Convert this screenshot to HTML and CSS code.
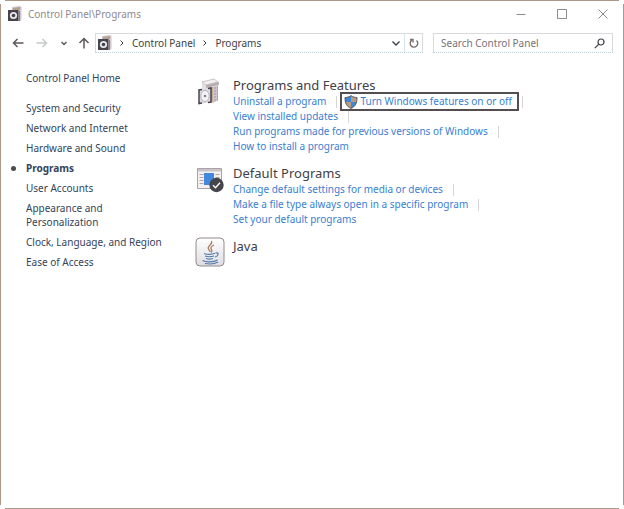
FILE: index.html
```
<!DOCTYPE html>
<html lang="en">
<head>
<meta charset="utf-8">
<title>Control Panel\Programs</title>
<link rel="stylesheet" href="styles.css">
</head>
<body>
<svg class="defs" aria-hidden="true">
  <symbol id="panel-icon" viewBox="0 0 14 16">
    <path d="M4 1l8-1 1.500 1v13l-2 1H4z" fill="#cfc8cc"/>
    <path d="M5 2l7-1v3H5z" fill="#b5a08c"/>
    <path d="M0 4h10.500v11H0z" fill="#46434a"/>
    <circle cx="5.500" cy="9.500" r="3.600" fill="#e9e9ee"/>
    <circle cx="5.500" cy="9.500" r="1.800" fill="#46434a"/>
    <path d="M11.500 5v10" stroke="#8e7c74"/>
  </symbol>
</svg>
<div class="window">
  <header class="titlebar">
    <svg class="app-icon" aria-hidden="true"><use href="#panel-icon"/></svg>
    <span class="title">Control Panel\Programs</span>
    <div class="controls">
      <button aria-label="Minimize"><svg viewBox="0 0 10 10"><path d="M0.500 5.500h9"/></svg></button>
      <button aria-label="Maximize"><svg viewBox="0 0 10 10"><path d="M0.500 0.500h9v9h-9z"/></svg></button>
      <button aria-label="Close"><svg viewBox="0 0 10 10"><path d="M0.500 0.500l9 9M9.500 0.500l-9 9"/></svg></button>
    </div>
  </header>
  <nav class="toolbar" aria-label="Navigation">
    <button class="nav" aria-label="Back"><svg viewBox="0 0 12 12"><path d="M11.500 6H1.500M5.500 2L1.500 6l4 4"/></svg></button>
    <button class="nav" aria-label="Forward" disabled><svg viewBox="0 0 12 12"><path d="M0.500 6h10M6.500 2l4 4-4 4"/></svg></button>
    <button class="nav recent" aria-label="Recent locations"><svg viewBox="0 0 12 12"><path d="M3.500 5L6 7.500 8.500 5"/></svg></button>
    <button class="nav" aria-label="Up"><svg viewBox="0 0 12 12"><path d="M6 11.500V1.500M1.500 6L6 1.500 10.500 6"/></svg></button>
    <div class="address">
      <svg class="app-icon" aria-hidden="true"><use href="#panel-icon"/></svg>
      <svg class="crumb-arrow" viewBox="0 0 6 8" aria-hidden="true"><path d="M1.500 1.500L4 4 1.500 6.500"/></svg>
      <a href="#">Control Panel</a>
      <svg class="crumb-arrow" viewBox="0 0 6 8" aria-hidden="true"><path d="M1.500 1.500L4 4 1.500 6.500"/></svg>
      <a href="#">Programs</a>
      <button class="history" aria-label="Previous locations"><svg viewBox="0 0 10 10"><path d="M1.500 3.500L5 7l3.500-3.500"/></svg></button>
      <button class="refresh" aria-label="Refresh"><svg viewBox="0 0 10 10"><path d="M2.800 2.200A3.800 3.800 0 1 0 7.500 2.500M1 1.500h3v3"/></svg></button>
    </div>
    <div class="search">
      <input type="search" placeholder="Search Control Panel" aria-label="Search Control Panel">
      <svg viewBox="0 0 11 11" aria-hidden="true"><circle cx="7" cy="4" r="3"/><path d="M4.800 6.200L0.800 10.200"/></svg>
    </div>
  </nav>
  <div class="content">
    <aside class="sidebar">
      <a class="home" href="#">Control Panel Home</a>
      <ul>
        <li><a href="#">System and Security</a></li>
        <li><a href="#">Network and Internet</a></li>
        <li><a href="#">Hardware and Sound</a></li>
        <li class="current"><a href="#" aria-current="page">Programs</a></li>
        <li><a href="#">User Accounts</a></li>
        <li><a href="#">Appearance and<br>Personalization</a></li>
        <li><a href="#">Clock, Language, and Region</a></li>
        <li><a href="#">Ease of Access</a></li>
      </ul>
    </aside>
    <main>
      <section>
        <svg class="category-icon" viewBox="0 0 30 30" aria-hidden="true">
          <path d="M7 6l12-3 4 3v4l-1 1v14l-5 2-10-2z" fill="#e4dfe2"/>
          <path d="M7 6l12-3 4 3-12 3z" fill="#f3f0f2" stroke="#c2b9be" stroke-width=".8"/>
          <path d="M11 9l13-3v3l-13 3z" fill="#b9b0b6"/>
          <path d="M13 12l5-1v15l-5 1z" fill="#c7ae92"/>
          <path d="M18 11l5-1v14l-5 3z" fill="#cfc7cd"/>
          <path d="M20 11v15M22.500 10.500v14" stroke="#a1969c" stroke-dasharray="2 1"/>
          <path d="M4 14l12-2v14l-12 2z" fill="#dcdae2"/>
          <path d="M7 13.500l-3 .5v13.500l3-.5M13 12.500l3-.5v14l-3 .5" fill="none" stroke="#46434a" stroke-width="1.500"/>
          <ellipse cx="10" cy="20" rx="4.200" ry="5.500" fill="#f4f3f8" stroke="#a9a4b4" stroke-width=".8"/>
          <circle cx="10" cy="20" r="1.300" fill="#8f7f78"/>
        </svg>
        <div>
          <h2>Programs and Features</h2>
          <ul class="tasks">
            <li class="divided"><a href="#">Uninstall a program</a></li>
            <li class="divided marked"><a href="#"><svg class="shield" viewBox="0 0 14 14" aria-hidden="true"><path d="M7 .7c2 1.400 4 1.800 6 1.800C13 8 11.500 11.500 7 13.400 2.500 11.500 1 8 1 2.500c2 0 4-.4 6-1.800z" fill="#b79c80"/><path d="M7 .7V7H1.500C1.100 5.500 1 4 1 2.500c2 0 4-.4 6-1.800zM7 7h5.500c-.8 3-2.500 5.200-5.500 6.400z" fill="#4086d8"/><path d="M7 .7c2 1.400 4 1.800 6 1.800C13 8 11.500 11.500 7 13.400 2.500 11.500 1 8 1 2.500c2 0 4-.4 6-1.800z" fill="none" stroke="#56555c"/></svg>Turn Windows features on or off</a></li>
            <li class="divided own-row"><a href="#">View installed updates</a></li>
            <li class="divided own-row"><a href="#">Run programs made for previous versions of Windows</a></li>
            <li class="own-row"><a href="#">How to install a program</a></li>
          </ul>
        </div>
      </section>
      <section>
        <svg class="category-icon" viewBox="0 0 30 30" aria-hidden="true">
          <path d="M2.500 4.500h24v20h-24z" fill="#f3f1f4" stroke="#aaa2a8"/>
          <path d="M3 5h23v2.500H3z" fill="#c9c3c8"/>
          <path d="M4.500 10.500h4M4.500 13.500h4M4.500 16.500h4M4.500 19.500h4M20.500 10.500h4M20.500 13.500h4" stroke="#b9a597"/>
          <path d="M9 9h10v12H9z" fill="#4388dc"/>
          <circle cx="21.500" cy="21" r="7.200" fill="#46454b"/>
          <path d="M18 21.300l2.500 2.500 4.500-5" fill="none" stroke="#fff" stroke-width="1.400"/>
        </svg>
        <div>
          <h2>Default Programs</h2>
          <ul class="tasks">
            <li class="divided own-row"><a href="#">Change default settings for media or devices</a></li>
            <li class="divided own-row"><a href="#">Make a file type always open in a specific program</a></li>
            <li class="own-row"><a href="#">Set your default programs</a></li>
          </ul>
        </div>
      </section>
      <section>
        <svg class="category-icon" viewBox="0 0 30 30" aria-hidden="true">
          <defs><linearGradient id="tile" x2="0" y2="1"><stop stop-color="#fff"/><stop offset="1" stop-color="#dddce2"/></linearGradient></defs>
          <rect x="1" y="1" width="28" height="28" rx="4" fill="url(#tile)" stroke="#958b8b"/>
          <path d="M16.500 4c2 3-5 5-3 8 .5 1 1.500 1.500 1.500 3M19 8c-3 1.500-4 3-2.500 4.500.8 1 .5 2-.5 3" fill="none" stroke="#a77f62" stroke-width="1.300"/>
          <path d="M9 16.500c3 1 8 1 11-.2M10 19c3 1 6 1 9 0M11 21.500c2.500.8 5 .8 7 0M20.500 16c4-1 3 3-.5 4M7.500 23.500c4 2 11 1.800 15-.5M10 26.500c4 .7 10 .4 13-1.500" fill="none" stroke="#527ba7" stroke-width="1.200"/>
        </svg>
        <div><h2>Java</h2></div>
      </section>
    </main>
  </div>
</div>
</body>
</html>
```
FILE: styles.css
```
* {
  box-sizing: border-box;
}

body {
  margin: 0;
  background: #fff;
  color: #3d3f46;
  font: 10px/14px "Noto Sans", "Open Sans", sans-serif;
}

.defs {
  position: absolute;
  width: 0;
  height: 0;
}

/* Thin frame whose four edges stop short of the corners */
.window {
  min-height: 100vh;
  padding: 1px;
  background:
    linear-gradient(#ad9786, #ad9786) top / calc(100% - 10px) 1px,
    linear-gradient(#ad9786, #ad9786) bottom / calc(100% - 10px) 1px,
    linear-gradient(#ad9786, #ad9786) left / 1px calc(100% - 8px),
    linear-gradient(#ad9786, #ad9786) right / 1px calc(100% - 8px);
  background-repeat: no-repeat;
}

a {
  color: inherit;
  text-decoration: none;
}

a:hover {
  text-decoration: underline;
}

button {
  display: flex;
  align-items: center;
  justify-content: center;
  padding: 0;
  border: 0;
  background: none;
  color: inherit;
}

button svg,
.crumb-arrow,
.search svg {
  fill: none;
  stroke: currentColor;
}

ul {
  margin: 0;
  padding: 0;
  list-style: none;
}

.titlebar {
  display: flex;
  align-items: center;
  gap: 6px;
  height: 26px;
  padding-left: 7px;
  color: #8f8a92;
}

.app-icon {
  flex: none;
  width: 14px;
  height: 16px;
}

.controls {
  display: flex;
  margin-left: auto;
}

.controls button {
  width: 41px;
  height: 26px;
}

.controls svg {
  width: 10px;
  height: 10px;
}

.toolbar {
  display: flex;
  align-items: center;
  height: 32px;
  padding: 0 10px 0 6px;
}

.nav {
  width: 22px;
  height: 20px;
  color: #5f5958;
}

.nav:disabled {
  width: 26px;
  color: #c3cbc9;
}

.recent {
  width: 18px;
}

.nav svg {
  width: 12px;
  height: 12px;
  stroke-width: 1.5;
}

.address,
.search {
  display: flex;
  align-items: center;
  height: 20px;
  border: 1px solid #d9dadd;
  border-bottom: 1px dotted #bcd0d8;
}

.address {
  flex: 1;
  gap: 7px;
  padding-left: 2px;
}

.crumb-arrow {
  width: 6px;
  height: 8px;
}

.history {
  width: 16px;
  height: 18px;
  margin-left: auto;
  margin-right: -7px;
}

.refresh {
  width: 18px;
  height: 18px;
  border-left: 1px solid #d9e8ee;
  color: #77706f;
}

.address button svg {
  width: 10px;
  height: 10px;
  stroke-width: 1.4;
}

.search {
  width: 180px;
  margin-left: 10px;
  padding: 0 7px;
}

.search input {
  flex: 1;
  min-width: 0;
  padding: 0;
  border: 0;
  outline: 0;
  background: none;
  font: inherit;
}

.search input::placeholder {
  color: #77727a;
  opacity: 1;
}

.search svg {
  width: 11px;
  height: 11px;
  stroke-width: 1.2;
}

.content {
  display: flex;
  padding: 12px 25px 24px;
}

.sidebar {
  width: 169px;
  flex: none;
  color: #33435a;
}

.home {
  display: block;
  margin-bottom: 16px;
}

.sidebar ul {
  display: flex;
  flex-direction: column;
  gap: 6px;
}

.current {
  position: relative;
  font-weight: 700;
}

.current::before {
  content: "";
  position: absolute;
  top: 5px;
  left: -15px;
  width: 5px;
  height: 5px;
  border-radius: 50%;
  background: #4b4c52;
}

main {
  display: flex;
  flex: 1;
  flex-direction: column;
  gap: 10px;
  padding-top: 5px;
}

section {
  display: flex;
  gap: 8px;
}

.category-icon {
  flex: none;
  width: 30px;
  height: 30px;
}

h2 {
  margin: 0;
  color: #3f4147;
  font-size: 13px;
  font-weight: 400;
  line-height: 18px;
}

.tasks {
  display: flex;
  flex-wrap: wrap;
  color: #3a80d0;
  line-height: 15px;
}

.tasks li {
  display: flex;
  align-items: center;
  height: 15px;
}

.tasks .own-row {
  flex-basis: 100%;
}

.divided::after {
  content: "";
  width: 1px;
  height: 12px;
  margin-left: 10px;
  background: #d8d4d8;
}

.marked::after {
  margin-left: 3px;
}

.marked a {
  display: flex;
  align-items: center;
  gap: 2px;
  height: 19px;
  margin-left: 3px;
  padding: 0 5px 0 2px;
  border: 2px solid #554e50;
}

.shield {
  width: 14px;
  height: 14px;
}
```
